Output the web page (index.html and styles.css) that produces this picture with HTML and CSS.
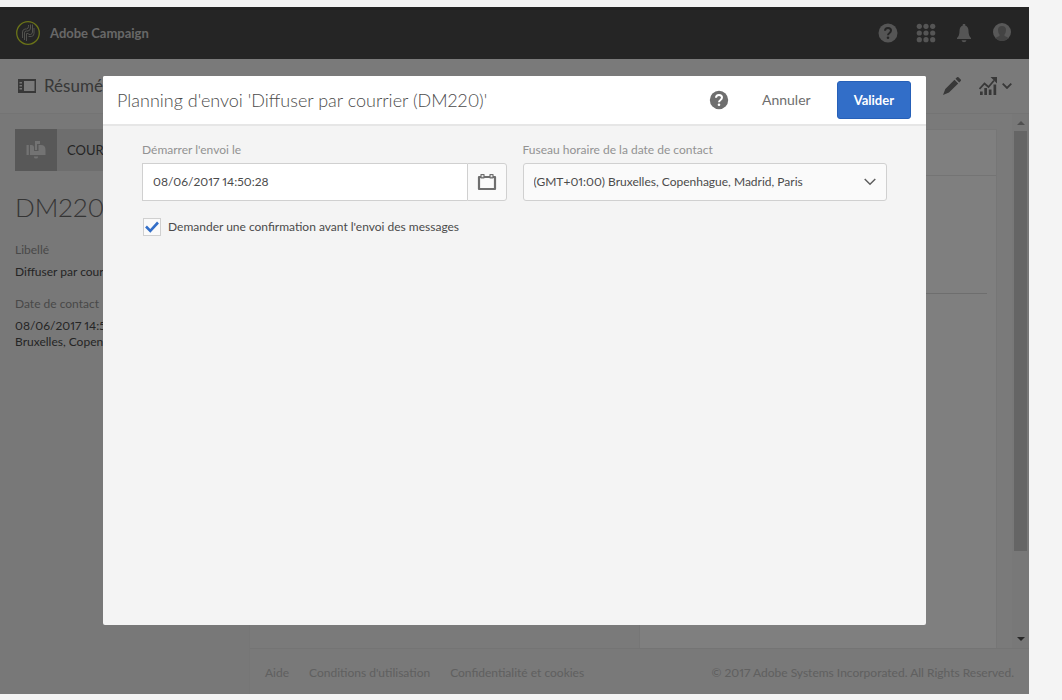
FILE: index.html
```html
<!DOCTYPE html>
<html lang="fr">
<head>
    <meta charset="UTF-8">
    <meta name="viewport" content="width=device-width, initial-scale=1.0">
    <title>Adobe Campaign</title>
    <link rel="stylesheet" href="styles.css">
</head>
<body>
    <div class="app">
        <header class="topbar">
            <a class="brand" href="#">
                <svg width="26" height="26" viewBox="0 0 26 26" fill="none">
                    <circle cx="13" cy="13" r="11.3" stroke="#d5e630" stroke-width="1.3"/>
                    <g stroke="#a4a49c" stroke-width="1">
                        <path d="M7.500 18v-6q0-2.500 2.500-3h1.500q2-.5 2-2.500V5"/>
                        <path d="M9.500 20v-7q0-2 2-2h1.500q2.500-.5 2.500-3V4.500"/>
                        <path d="M11.500 21v-7.500h2"/>
                        <path d="M17.500 4.500V12q0 2-2 2.500H13.500"/>
                        <path d="M19 8v5.500q0 2.500-2.500 3H13.500"/>
                    </g>
                </svg>
                <span>Adobe Campaign</span>
            </a>
            <nav class="topbar-actions">
                <button class="icon-btn" aria-label="Aide">
                    <svg width="20" height="20" viewBox="0 0 20 20">
                        <circle cx="10" cy="10" r="9.500" fill="#aaa"/>
                        <path d="M7 7.800Q7 5 10 5t3 2.600q0 1.400-1.500 2.400T10 12.200" fill="none" stroke="#4b4b4b" stroke-width="2"/>
                        <circle cx="10" cy="14.800" r="1.300" fill="#4b4b4b"/>
                    </svg>
                </button>
                <button class="icon-btn" aria-label="Solutions">
                    <svg width="20" height="20" viewBox="0 0 20 20" fill="#aaa">
                        <circle cx="3.300" cy="3.300" r="2.600"/><circle cx="10" cy="3.300" r="2.600"/><circle cx="16.700" cy="3.300" r="2.600"/>
                        <circle cx="3.300" cy="10" r="2.600"/><circle cx="10" cy="10" r="2.600"/><circle cx="16.700" cy="10" r="2.600"/>
                        <circle cx="3.300" cy="16.700" r="2.600"/><circle cx="10" cy="16.700" r="2.600"/><circle cx="16.700" cy="16.700" r="2.600"/>
                    </svg>
                </button>
                <button class="icon-btn" aria-label="Notifications">
                    <svg width="20" height="20" viewBox="0 0 20 20" fill="#aaa">
                        <path d="M8.800 2.500V1h2.400v1.500Q14.500 3.500 14.500 8q0 5 2.500 7v1H3v-1q2.500-2 2.500-7 0-4.500 3.300-5.500z"/>
                        <path d="M7.500 17.300h5q-.5 1.900-2.500 1.900t-2.500-1.900z"/>
                    </svg>
                </button>
                <button class="icon-btn" aria-label="Profil">
                    <svg width="20" height="20" viewBox="0 0 20 20">
                        <circle cx="10" cy="9" r="9" fill="#b0b0b0"/>
                        <path d="M3.500 15.200q1-1.500 4-2.200v-1.500Q6 9.800 6 7q0-4 4-4t4 4q0 2.800-1.500 4.500V13q3 .7 4 2.200Q14 18 10 18t-6.500-2.800z" fill="#868686"/>
                    </svg>
                </button>
            </nav>
        </header>

        <div class="toolbar">
            <h1 class="page-title">
                <svg width="18" height="16" viewBox="0 0 18 16">
                    <path d="M0 1h18v14H0zM6 3v10h10.500V3z" fill="#707070" fill-rule="evenodd"/>
                    <path d="M1.500 4h2.500v1.500H1.500zM1.500 7h2.500v1.500H1.500zM1.500 10h2.500v1.500H1.500z" fill="#e8e8e8"/>
                </svg>
                <span>Résumé</span>
            </h1>
            <div class="toolbar-actions">
                <button class="icon-btn" aria-label="Modifier">
                    <svg width="18" height="18" viewBox="0 0 18 18" fill="#707070">
                        <path d="M11.500 2.800l3.700 3.700L6 15.500 0 18l2.300-6zM12.500 1.800L14 .3q.8-.6 1.500 0l2.200 2.200q.6.700 0 1.500l-1.500 1.500z"/>
                    </svg>
                </button>
                <button class="icon-btn menu-btn" aria-label="Rapports">
                    <svg width="18" height="18" viewBox="0 0 18 18">
                        <path d="M.5 12l5-5.500 4 3.500L15 3.500" fill="none" stroke="#707070" stroke-width="1.800"/>
                        <path d="M11.500 0H18v6.500zM1 14.500h2.700V18H1zM5.300 11H8v7H5.300zM9.800 12.500h2.700V18H9.800zM14.500 7.500h2.700V18h-2.700z" fill="#707070"/>
                    </svg>
                    <svg width="10" height="6" viewBox="0 0 10 6">
                        <path d="M.7.700L5 5 9.300.700" fill="none" stroke="#707070" stroke-width="1.800"/>
                    </svg>
                </button>
            </div>
        </div>

        <div class="workspace">
            <aside class="sidebar">
                <div class="channel">
                    <span class="channel-icon">
                        <svg width="20" height="20" viewBox="0 0 20 20" fill="#e6e6e6">
                            <path d="M.5 5h2.300v10H.5zM4 5h1.500q2.500 0 2.500 2.500V11h4.500V5H15q4.500 0 4.500 5v5H4z"/>
                            <path d="M9 1h5v3h-3v6H9z"/>
                            <path d="M8 16.500h4v.5q0 1.500-2 1.500T8 17z"/>
                        </svg>
                    </span>
                    <span class="channel-name">COURRIER</span>
                </div>
                <h2 class="delivery-id">DM220</h2>
                <dl class="details">
                    <dt>Libellé</dt>
                    <dd>Diffuser par courrier</dd>
                    <dt>Date de contact</dt>
                    <dd>08/06/2017 14:50:28 (GMT+01:00)<br>Bruxelles, Copenhague, Madrid, Paris</dd>
                </dl>
            </aside>

            <div class="content">
                <main class="board">
                    <div class="board-left"></div>
                    <section class="panel">
                        <div class="panel-head"></div>
                        <div class="panel-block"></div>
                    </section>
                    <div class="scrollbar">
                        <span class="arrow arrow-up"></span>
                        <span class="track"><span class="thumb"></span></span>
                        <span class="arrow arrow-down"></span>
                    </div>
                </main>
                <footer class="footer">
                    <nav class="footer-links">
                        <a href="#">Aide</a>
                        <a href="#">Conditions d'utilisation</a>
                        <a href="#">Confidentialité et cookies</a>
                    </nav>
                    <span>© 2017 Adobe Systems Incorporated. All Rights Reserved.</span>
                </footer>
            </div>
        </div>

        <div class="backdrop">
            <form class="dialog" role="dialog" aria-labelledby="dialog-title">
                <div class="dialog-head">
                    <h2 class="dialog-title" id="dialog-title">Planning d'envoi 'Diffuser par courrier (DM220)'</h2>
                    <button type="button" class="icon-btn" aria-label="Aide">
                        <svg width="20" height="20" viewBox="0 0 20 20">
                            <circle cx="10" cy="10" r="9.200" fill="#6e6e6e"/>
                            <path d="M7 7.800Q7 5 10 5t3 2.600q0 1.400-1.500 2.400T10 12.200" fill="none" stroke="#fff" stroke-width="2"/>
                            <circle cx="10" cy="14.800" r="1.300" fill="#fff"/>
                        </svg>
                    </button>
                    <button type="button" class="btn btn-quiet">Annuler</button>
                    <button type="button" class="btn btn-primary">Valider</button>
                </div>
                <div class="dialog-body">
                    <div class="field">
                        <label for="start-date">Démarrer l'envoi le</label>
                        <div class="date-picker">
                            <input type="text" id="start-date" value="08/06/2017 14:50:28">
                            <button type="button" class="date-btn" aria-label="Calendrier">
                                <svg width="20" height="18" viewBox="0 0 20 18">
                                    <path d="M2 4h16v12H2z" fill="none" stroke="#6e6e6e" stroke-width="2.200" stroke-linejoin="round"/>
                                    <path d="M4 1.500h3v3.300H4zM13 1.500h3v3.300h-3z" fill="#e0e0e0" stroke="#6e6e6e" stroke-width="1.200" stroke-linejoin="round"/>
                                </svg>
                            </button>
                        </div>
                    </div>
                    <div class="field">
                        <label for="timezone">Fuseau horaire de la date de contact</label>
                        <div class="select">
                            <select id="timezone">
                                <option>(GMT+01:00) Bruxelles, Copenhague, Madrid, Paris</option>
                            </select>
                            <svg class="select-arrow" width="12" height="8" viewBox="0 0 12 8">
                                <path d="M.7 1L6 6.300 11.300 1" fill="none" stroke="#606060" stroke-width="1.500"/>
                            </svg>
                        </div>
                    </div>
                    <div class="confirm">
                        <span class="checkbox">
                            <input type="checkbox" id="confirm" checked>
                            <svg class="tick" width="14" height="12" viewBox="0 0 14 12">
                                <path d="M1 5.500l4.300 4.300L13 1.500" fill="none" stroke="#326ec8" stroke-width="2.600"/>
                            </svg>
                        </span>
                        <label for="confirm">Demander une confirmation avant l'envoi des messages</label>
                    </div>
                </div>
            </form>
        </div>
    </div>
</body>
</html>
```
FILE: styles.css
```css
* {
    box-sizing: border-box;
}
body {
    margin: 0;
    padding: 7px 33px 6px 0;
    min-height: 100vh;
    display: flex;
    background: #f4f4f4;
    color: #4b4b4b;
    font-family: Lato, "Liberation Sans", sans-serif;
    font-size: 12px;
    font-variant-numeric: proportional-nums;
    line-height: 16px;
}
h1, h2, dl, dd {
    margin: 0;
    font-weight: 400;
}
svg {
    display: block;
}
button, input, select {
    font: inherit;
    font-variant-numeric: inherit;
    color: inherit;
}
.app {
    position: relative;
    flex: 1;
    display: flex;
    flex-direction: column;
    overflow: hidden;
}
.icon-btn {
    display: flex;
    padding: 0;
    border: none;
    background: none;
    cursor: pointer;
}

/* Top bar */
.topbar {
    display: flex;
    justify-content: space-between;
    align-items: center;
    height: 52px;
    padding: 0 17px 0 15px;
    background: #4a4a4a;
}
.brand {
    display: flex;
    align-items: center;
    gap: 9px;
    color: #d0d0d0;
    font-size: 13px;
    font-weight: 700;
    text-decoration: none;
}
.topbar-actions {
    display: flex;
    align-items: center;
    gap: 18px;
}

/* Toolbar */
.toolbar {
    display: flex;
    justify-content: space-between;
    align-items: center;
    height: 55px;
    padding: 0 17px 0 18px;
    background: #f4f4f4;
    border-bottom: 1px solid #e8e8e8;
}
.page-title {
    display: flex;
    align-items: center;
    gap: 8px;
    color: #707070;
    font-size: 17px;
}
.toolbar-actions {
    display: flex;
    gap: 18px;
}
.menu-btn {
    align-items: center;
    gap: 5px;
}

/* Workspace */
.workspace {
    flex: 1;
    display: flex;
}
.sidebar {
    width: 250px;
    padding: 15px;
    background: #f0f0f0;
    border-right: 1px solid #ececec;
}
.channel {
    display: flex;
    align-items: center;
    height: 42px;
    background: #dcdcdc;
}
.channel-icon {
    display: flex;
    align-items: center;
    justify-content: center;
    width: 42px;
    height: 42px;
    background: #b0b0b0;
}
.channel-name {
    padding-left: 10px;
    font-size: 13px;
}
.delivery-id {
    margin: 20px 0 19px;
    color: #6a6a6a;
    font-size: 26px;
    font-weight: 300;
    line-height: 32px;
}
.details dt {
    margin-bottom: 6px;
    color: #929292;
}
.details dd {
    margin-bottom: 16px;
    white-space: nowrap;
}
.content {
    flex: 1;
    display: flex;
    flex-direction: column;
}
.board {
    flex: 1;
    display: flex;
    background: #f4f4f4;
}
.board-left {
    flex: 1;
}
.panel {
    width: 358px;
    margin: 15px 15px 0 0;
    background: #fefefe;
    border: 1px solid #ececec;
    border-bottom: none;
}
.panel-head {
    height: 46px;
    border-bottom: 1px solid #e8e8e8;
}
.panel-block {
    height: 118px;
    margin: 0 9px;
    border-bottom: 1px solid #dcdcdc;
}
.scrollbar {
    display: flex;
    flex-direction: column;
    align-items: center;
    justify-content: space-between;
    width: 17px;
    padding: 7px 0;
    background: #f0f0f0;
}
.arrow {
    border: 4px solid transparent;
}
.arrow-up {
    border-top: none;
    border-bottom-color: #a0a0a0;
}
.arrow-down {
    border-bottom: none;
    border-top-color: #505050;
}
.track {
    flex: 1;
    width: 13px;
    padding: 6px 0;
}
.thumb {
    display: block;
    height: 84%;
    background: #cacaca;
}
.footer {
    display: flex;
    justify-content: space-between;
    align-items: center;
    height: 46px;
    padding: 2px 15px 0;
    background: #f2f2f2;
    border-top: 1px solid #e8e8e8;
    color: #c0c0c0;
}
.footer-links {
    display: flex;
    gap: 20px;
}
.footer a {
    color: inherit;
    text-decoration: none;
}

/* Dialog */
.backdrop {
    position: absolute;
    inset: 0;
    display: flex;
    padding: 69px 103px;
    background: rgba(0, 0, 0, 0.5);
}
.dialog {
    flex: 1;
    background: #f4f4f4;
    border-radius: 2px;
    overflow: hidden;
}
.dialog-head {
    display: flex;
    align-items: center;
    height: 50px;
    padding: 0 15px 0 14px;
    background: #fff;
    border-bottom: 2px solid #e6e6e6;
}
.dialog-title {
    flex: 1;
    font-size: 18px;
    font-weight: 300;
    line-height: 24px;
}
.btn {
    height: 38px;
    padding: 0 16px;
    border: 1px solid transparent;
    border-radius: 3px;
    font-size: 14px;
    cursor: pointer;
}
.btn-quiet {
    margin: 0 9px 0 16px;
    background: none;
    color: #6e6e6e;
}
.btn-primary {
    background: #326ec8;
    border-color: #2660b8;
    color: #fff;
    font-size: 13px;
    font-weight: 700;
}
.dialog-body {
    display: grid;
    grid-template-columns: 1fr 1fr;
    gap: 16px;
    padding: 16px 39px;
}
.field label {
    display: block;
    margin-bottom: 5px;
    color: #929292;
}
.date-picker {
    display: flex;
    height: 38px;
}
.date-picker input {
    flex: 1;
    min-width: 0;
    padding: 0 10px;
    border: 1px solid #d0d0d0;
    border-right: none;
    background: #fff;
}
.date-btn {
    display: flex;
    align-items: center;
    justify-content: center;
    width: 40px;
    padding: 0;
    background: #fafafa;
    border: 1px solid #d0d0d0;
    border-radius: 0 3px 3px 0;
}
.select {
    position: relative;
}
.select select {
    appearance: none;
    display: block;
    width: 100%;
    height: 38px;
    padding: 0 30px 0 10px;
    background: #fafafa;
    border: 1px solid #d0d0d0;
    border-radius: 3px;
}
.select-arrow {
    position: absolute;
    top: 15px;
    right: 11px;
    pointer-events: none;
}
.confirm {
    grid-column: 1 / -1;
    display: flex;
    align-items: center;
    gap: 7px;
    padding: 1px 0 0 1px;
}
.checkbox {
    position: relative;
}
.checkbox input {
    appearance: none;
    display: block;
    width: 18px;
    height: 18px;
    margin: 0;
    background: #fafafa;
    border: 1px solid #d0d0d0;
}
.checkbox .tick {
    position: absolute;
    top: 3px;
    left: 2px;
    visibility: hidden;
    pointer-events: none;
}
.checkbox input:checked + .tick {
    visibility: visible;
}
```
